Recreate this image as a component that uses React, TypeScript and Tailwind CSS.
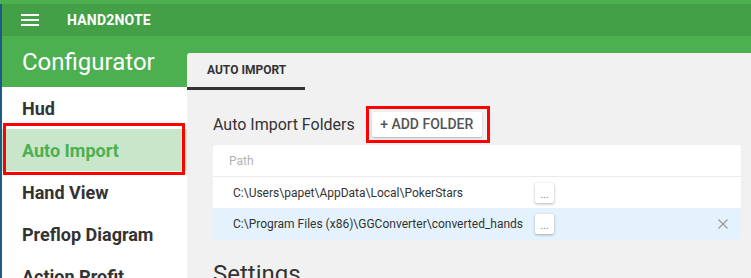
export default function App() {
  const items = ["Hud", "Auto Import", "Hand View", "Preflop Diagram", "Action Profit"];

  return (
    <div className="w-[751px] h-[278px] overflow-hidden bg-[#4caf50] flex flex-col font-['Roboto',sans-serif]">
      <div className="h-[4px] shrink-0" />
      <div className="flex flex-1 min-h-0">
        <div className="w-[2px] shrink-0 bg-[#1d5a88]" />
        <div className="flex flex-1 flex-col min-w-0">
          {/* title bar */}
          <div className="h-[32px] shrink-0 bg-[#43a047] flex items-center">
            <div className="ml-[19px] w-[18px] flex flex-col gap-[3px]">
              <span className="h-[2px] bg-white" />
              <span className="h-[2px] bg-white" />
              <span className="h-[2px] bg-white" />
            </div>
            <span className="ml-[28px] text-white text-[14px] font-bold tracking-[0.2px]">HAND2NOTE</span>
          </div>

          <div className="flex flex-1 min-h-0">
            {/* sidebar */}
            <div className="w-[185px] shrink-0 flex flex-col">
              <div className="h-[51px] shrink-0 flex items-center pl-[20px] text-white text-[24px]">
                Configurator
              </div>
              <div className="flex-1 bg-white">
                {items.map((item) => {
                  const active = item === "Auto Import";
                  return (
                    <div
                      key={item}
                      className={
                        active
                          ? "relative h-[42px] flex items-center pl-[20px] text-[18px] font-bold bg-[#c8e6c9] text-[#4caf50]"
                          : "relative h-[42px] flex items-center pl-[20px] text-[18px] font-bold text-[#333333]"
                      }
                    >
                      {item}
                      {active && (
                        <span className="absolute left-[1px] right-[2px] top-[-6px] bottom-[-4px] border-[3px] border-[#ff0000]" />
                      )}
                    </div>
                  );
                })}
              </div>
            </div>

            {/* main */}
            <div className="flex-1 pt-[17px] min-w-0">
              <div className="h-full bg-[#f1f1f1] rounded-tl-[3px]">
                <div className="w-[118px] h-[37px] border-b-[3px] border-[#333333] flex items-center pl-[20px] text-[12px] font-bold text-[#333333]">
                  AUTO IMPORT
                </div>

                <div className="pl-[26px] pr-[10px]">
                  <div className="mt-[16px] flex items-center">
                    <span className="text-[16px] text-[#333333] mr-[11px]">Auto Import Folders</span>
                    <span className="inline-flex border-[3px] border-[#ff0000] pt-[3px] pb-[3px] pl-[3px] pr-[5px]">
                      <span className="w-[110px] h-[25px] bg-white rounded-[2px] shadow-[0_1px_2px_rgba(0,0,0,0.25)] flex items-center justify-center text-[14px] font-medium text-[#555555]">
                        + ADD FOLDER
                      </span>
                    </span>
                  </div>

                  <div className="mt-[2px] bg-white rounded-[3px] overflow-hidden">
                    <div className="h-[32px] border-b border-[#ebebeb] flex items-center pl-[16px] text-[12px] text-[#b3b3b3]">
                      Path
                    </div>
                    <div className="h-[31px] flex items-center">
                      <span className="w-[322px] pl-[20px] text-[12px] text-[#333333] whitespace-nowrap">
                        C:\Users\papet\AppData\Local\PokerStars
                      </span>
                      <span className="w-[19px] h-[20px] bg-white rounded-[2px] shadow-[0_1px_3px_rgba(0,0,0,0.3)] flex items-end justify-center pb-[3px] text-[11px] leading-none text-[#888888]">
                        ...
                      </span>
                    </div>
                    <div className="h-[32px] flex items-center bg-[#e3f2fd]">
                      <span className="w-[322px] pl-[20px] text-[12px] text-[#333333] whitespace-nowrap">
                        C:\Program Files (x86)\GGConverter\converted_hands
                      </span>
                      <span className="w-[19px] h-[20px] bg-white rounded-[2px] shadow-[0_1px_3px_rgba(0,0,0,0.3)] flex items-end justify-center pb-[3px] text-[11px] leading-none text-[#888888]">
                        ...
                      </span>
                      <span className="flex-1" />
                      <svg className="mr-[13px]" width="10" height="10" viewBox="0 0 10 10">
                        <path d="M0.5 0.5 L9.5 9.5 M9.5 0.5 L0.5 9.5" stroke="#999999" strokeWidth="1.2" />
                      </svg>
                    </div>
                  </div>

                  <div className="mt-[20px] text-[24px] leading-[28px] text-[#333333]">Settings</div>
                </div>
              </div>
            </div>
          </div>
        </div>
      </div>
    </div>
  );
}
